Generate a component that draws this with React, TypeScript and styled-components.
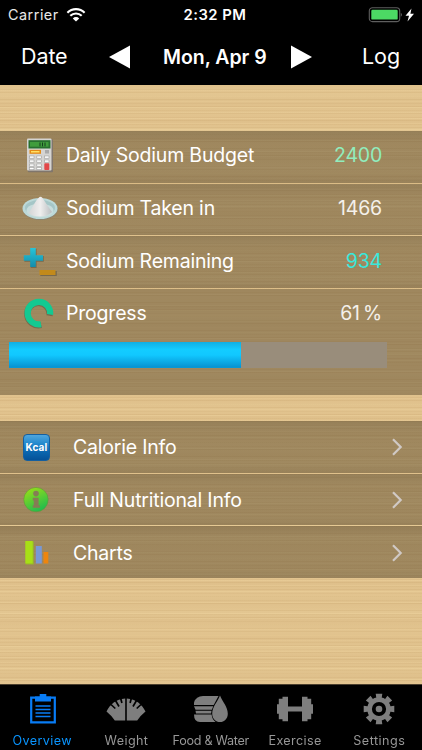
import React, { ReactNode } from 'react';
import styled, { createGlobalStyle } from 'styled-components';

const GlobalStyle = createGlobalStyle`
  * {
    box-sizing: border-box;
  }

  body {
    margin: 0;
    background: #000;
    font-family: Inter, 'Liberation Sans', sans-serif;
    -webkit-font-smoothing: antialiased;
  }
`;

const Screen = styled.div`
  width: 422px;
  height: 750px;
  display: flex;
  flex-direction: column;
  overflow: hidden;
  color: #fff;
  white-space: nowrap;
`;

const StatusBar = styled.div`
  height: 28px;
  flex: none;
  display: grid;
  grid-template-columns: 1fr auto 1fr;
  align-items: center;
  padding: 1px 6px 0 8px;
  background: #000;
  font-size: 14.4px;
`;

const Carrier = styled.div`
  display: flex;
  align-items: center;
  gap: 7px;
  color: #e8e8e8;
  letter-spacing: 0.5px;
`;

const Clock = styled.div`
  font-weight: 600;
  font-size: 14.8px;
  letter-spacing: 0.5px;
  padding-left: 6px;
`;

const Battery = styled.div`
  display: flex;
  justify-content: flex-end;
`;

const NavBar = styled.div`
  height: 57px;
  flex: none;
  display: flex;
  justify-content: space-between;
  align-items: center;
  padding: 0 22px 0 21px;
  background: #000;
`;

const NavButton = styled.button`
  padding: 0 0 2px;
  border: 0;
  background: none;
  color: #fff;
  font: 400 21.5px Inter, sans-serif;
  letter-spacing: -0.1px;
`;

const DayPicker = styled.div`
  display: flex;
  align-items: center;
  gap: 23px;
  margin-right: 9px;
`;

const Day = styled.div`
  width: 115px;
  padding-left: 9px;
  text-align: center;
  font-size: 19.5px;
  font-weight: 600;
  letter-spacing: -0.05px;
`;

const Content = styled.div`
  flex: 1;
  display: flex;
  flex-direction: column;
  gap: 26px;
  padding-top: 46px;
  background:
    repeating-linear-gradient(
      180deg,
      rgba(148, 101, 38, 0.08) 0 1px,
      transparent 1px 4px,
      rgba(148, 101, 38, 0.05) 4px 5px,
      transparent 5px 7px
    ),
    repeating-linear-gradient(
      180deg,
      rgba(255, 232, 178, 0.2) 0 1px,
      transparent 1px 5px,
      rgba(255, 232, 178, 0.12) 5px 6px,
      transparent 6px 11px
    ),
    repeating-linear-gradient(
      180deg,
      #dfc08b 0,
      #e3c691 9px,
      #dfc08b 17px,
      #e2c48f 29px,
      #dfc08b 37px
    );
`;

const Section = styled.div`
  display: flex;
  flex-direction: column;
  gap: 1px;
`;

const Row = styled.div`
  height: 51.67px;
  display: flex;
  align-items: center;
  padding: 0 40px 3px 22px;
  background: linear-gradient(
    180deg,
    rgba(75, 60, 35, 0.5) 0,
    rgba(80, 65, 38, 0.45) 12px,
    rgba(80, 65, 38, 0.45) calc(100% - 8px),
    rgba(75, 60, 35, 0.48) 100%
  );
`;

const LinkRow = styled(Row)`
  padding: 1px 18px 0 22px;
`;

const ProgressPanel = styled.div`
  height: 106px;
  display: flex;
  flex-direction: column;
  background: rgba(80, 65, 38, 0.45);
`;

const ProgressRow = styled(Row)`
  background: none;
`;

const IconBox = styled.div<{ $width: number }>`
  width: ${({ $width }) => $width}px;
  flex: none;
  display: flex;
`;

const Label = styled.div`
  flex: 1;
  font-size: 19.5px;
  letter-spacing: -0.2px;
`;

const Value = styled.div<{ $color?: string }>`
  font-size: 19.5px;
  letter-spacing: -0.2px;
  word-spacing: -2px;
  color: ${({ $color }) => $color || '#f4f0ea'};
`;

const Track = styled.div`
  width: 378px;
  height: 26px;
  margin: 1px 0 0 9px;
  background: #998d7b;
`;

const Fill = styled.div`
  height: 100%;
  background: linear-gradient(
    180deg,
    #10afe2 0,
    #13ccff 30%,
    #11c8ff 50%,
    #0795d3 95%,
    #0799d5 100%
  );
`;

const TabBar = styled.div`
  height: 66px;
  flex: none;
  display: grid;
  grid-template-columns: repeat(5, 84.3px);
  border-top: 1px solid #4b3f2d;
  background: #000;
`;

const Tab = styled.div<{ $active?: boolean }>`
  display: flex;
  flex-direction: column;
  align-items: center;
  color: ${({ $active }) => ($active ? '#087cf5' : '#7e7e7e')};
`;

const TabIcon = styled.div`
  height: 48px;
  display: flex;
  align-items: center;
`;

const TabLabel = styled.div<{ $spacing: number }>`
  font-size: 12.6px;
  line-height: 15px;
  letter-spacing: ${({ $spacing }) => $spacing}px;
  filter: brightness(1.2);
`;

const WifiIcon = () => (
  <svg width="20" height="14" viewBox="0 0 20 14" fill="none" stroke="#fff">
    <path d="M1.4 4.7a12.3 12.3 0 0 1 17.2 0" strokeWidth="2.2" />
    <path d="M4.3 7.8a8.1 8.1 0 0 1 11.4 0" strokeWidth="2.1" />
    <path d="M10 13.6 6.8 10.4a4.5 4.5 0 0 1 6.4 0Z" fill="#fff" stroke="none" />
  </svg>
);

const BatteryIcon = () => (
  <svg width="48" height="16" viewBox="0 0 48 16">
    <rect x="1.3" y="0.8" width="30.4" height="13.8" rx="3.2" fill="none" stroke="#5e5e5e" strokeWidth="1.1" />
    <rect x="3.3" y="2.8" width="26.4" height="9.8" rx="1.2" fill="#4cd964" />
    <path d="M32.8 5.7q2.2 2 0 4Z" fill="#6b6b6b" />
    <path d="m43.5 1.5-6 7.3h3.5L39.5 14.5l6.5-7.7h-3.6Z" fill="#fff" />
  </svg>
);

const Arrow = ({ points }: { points: string }) => (
  <svg width="21" height="24" viewBox="0 0 21 24" fill="#fff">
    <polygon points={points} />
  </svg>
);

const CalculatorIcon = () => (
  <svg width="36" height="36" viewBox="0 0 36 36">
    <rect x="5.8" y="2.3" width="25.2" height="33" rx="1" fill="#80766c" />
    <rect x="5" y="1.5" width="24.5" height="32" rx="1" fill="#d5d4d2" />
    <rect x="6.5" y="3.2" width="22" height="8.3" fill="#28702f" />
    <rect x="8" y="5" width="18.5" height="4.7" fill="#3f9c3b" />
    <path d="M18 5.5v3.8M20.5 5.5v3.8M23 5.5v3.8" stroke="#163f20" />
    <rect x="7.5" y="12.8" width="11.5" height="4" fill="#e48b16" />
    <rect x="9" y="14" width="8.5" height="1.5" fill="#ffe064" />
    <rect x="23" y="13" width="4" height="3.5" fill="#aaa" />
    <g fill="#fff" stroke="#9d9d9d" strokeWidth="0.6">
      {[19, 23, 27, 30.5].map((y) => (
        <g key={y}>
          <rect x="7.5" y={y} width="4.5" height="2.2" />
          <rect x="14.8" y={y} width="4.5" height="2.2" />
        </g>
      ))}
      <rect x="22.5" y="19" width="4.5" height="2.2" />
      <rect x="22.5" y="23" width="4.5" height="2.2" />
    </g>
    <rect x="22.3" y="26.2" width="5" height="6.8" rx="0.8" fill="#e24749" />
  </svg>
);

const SaltIcon = () => (
  <svg width="36" height="26" viewBox="0 0 36 26">
    <defs>
      <linearGradient id="salt" x1="0" x2="1">
        <stop offset="0" stopColor="#d4d4d5" />
        <stop offset="0.5" stopColor="#efeeee" />
        <stop offset="1" stopColor="#b9bec1" />
      </linearGradient>
    </defs>
    <ellipse cx="18.3" cy="14.6" rx="17.5" ry="10.5" fill="#8d836f" />
    <ellipse cx="18" cy="13.5" rx="17.5" ry="10.5" fill="#bcd9d8" />
    <ellipse cx="18" cy="13" rx="15" ry="8" fill="#a5c6c7" />
    <ellipse cx="18" cy="15.5" rx="13.5" ry="7" fill="#c8dddd" />
    <path d="M6.5 18C10 14 12 7.5 16.5 3Q18.5 0.5 20.5 3C24 8 27 13 30 17Q25 21.5 18 21.5T6.5 18Z" fill="url(#salt)" />
  </svg>
);

const PlusMinusIcon = () => (
  <svg width="36" height="32" viewBox="0 0 36 32">
    <defs>
      <linearGradient id="plus" x2="0" y2="1">
        <stop stopColor="#27c5d9" />
        <stop offset="1" stopColor="#148caa" />
      </linearGradient>
    </defs>
    <path d="M8.8 3.8h5.8v7.3h7.2v5.6h-7.2v6.2H8.8v-6.2H2.4v-5.6h6.4Z" fill="#77694d" />
    <path d="M8.2 3h5.6v7.3h7.2v5.4h-7.2v6.3H8.2v-6.3H1.8v-5.4h6.4Z" fill="url(#plus)" />
    <path d="M18.3 26h16.5v5H18.3Z" fill="#77694d" />
    <path d="M17.5 25h16v5h-16Z" fill="#c28a1b" />
  </svg>
);

const RingIcon = () => (
  <svg width="36" height="32" viewBox="0 0 36 32" fill="none" strokeWidth="6.2">
    <path d="M27.5 18.8A11.2 11.2 0 1 0 19.2 28" stroke="#776b4c" />
    <path d="M28.1 17.5A11.3 11.3 0 1 0 19 27.2" stroke="#13c991" />
  </svg>
);

const KcalBadge = styled.div`
  width: 27px;
  height: 27px;
  display: flex;
  justify-content: center;
  padding-top: 7px;
  margin-left: 1px;
  border: 1px solid #155f9f;
  border-radius: 4px;
  background: linear-gradient(180deg, #4fa6de 0, #2389cd 35%, #0b68b1 65%, #055298);
  font: 700 10px/11px Inter, sans-serif;
  letter-spacing: 0.2px;
`;

const InfoIcon = () => (
  <svg width="28" height="28" viewBox="0 0 28 28">
    <defs>
      <linearGradient id="info" x2="0.5" y2="1">
        <stop stopColor="#a4e213" />
        <stop offset="1" stopColor="#26bd4b" />
      </linearGradient>
    </defs>
    <circle cx="14" cy="13.6" r="12.2" fill="url(#info)" stroke="#64953a" strokeWidth="0.6" />
    <circle cx="14" cy="7.6" r="2.8" fill="#857c55" />
    <path d="M10.8 11.8h5.8v7.4h1.3v2.6h-7.1v-2.6h1v-4.8h-1Z" fill="#857c55" />
  </svg>
);

const ChartIcon = () => (
  <svg width="28" height="28" viewBox="0 0 28 28">
    <path d="M3.8 2.5h8v23h-8Z" fill="#96b52b" />
    <path d="M3.3 2h7.4v22.5H3.3Z" fill="#a8df16" />
    <path d="M13.8 7h6v17.5h-6Z" fill="#7898d6" />
    <path d="M21.5 13h4.8v11.5h-4.8Z" fill="#ee850d" />
  </svg>
);

const Chevron = () => (
  <svg width="12" height="18" viewBox="0 0 12 18" fill="none" stroke="#d0c9c5" strokeWidth="2.2">
    <path d="m1 1.3 7.7 7.7L1 16.7" />
  </svg>
);

const ClipboardIcon = () => (
  <svg width="27" height="32" viewBox="0 0 27 32" fill="none" stroke="currentColor">
    <path d="M2.2 4.7h23.6v24.6H2.2Z" strokeWidth="2.2" />
    <path d="M6 3.5h4.7V1h6.6v2.5H22V8.5H6Z" fill="currentColor" stroke="none" />
    <path d="M6.5 13h15M6.5 16.5h15M6.5 20h15M6.5 23.5h15" strokeWidth="1.6" />
  </svg>
);

const ScaleIcon = () => (
  <svg width="40" height="26" viewBox="0 0 40 26">
    <path
      d="M0.5 15.5C4 8.5 10 3 19.2 2.5V24.5H8.8Q5.5 19.5 0.5 15.5ZM39.5 15.5C36 8.5 30 3 20.8 2.5v22h10.4q3.3-5 8.3-9Z"
      fill="currentColor"
    />
    <path
      d="m5 8.5 4.3 4M9.5 4.5l3.5 6M14.6 2l1.3 5M35 8.5l-4.3 4M30.5 4.5l-3.5 6M25.4 2l-1.3 5"
      stroke="#000"
      strokeWidth="1.7"
    />
  </svg>
);

const FoodIcon = () => (
  <svg width="36" height="28" viewBox="0 0 36 28" fill="currentColor">
    <path d="M1 10V7.5Q3 1 10 1h15.5l-4.8 9Z" />
    <path d="M1 11.2h19.3l-1.5 3.6H2.5ZM2.5 15.8h16l-.4 2.6H3ZM1 19.5h17.6q.5 5 4 7.5H7q-6 0-6-7.5Z" />
    <path d="M27 0.5c2.8 6.5 7.8 11.7 7.8 18.2 0 5-3.5 8.3-7.8 8.3s-7.8-3.3-7.8-8.3C19.2 12.2 24.2 7 27 0.5Z" />
  </svg>
);

const DumbbellIcon = () => (
  <svg width="38" height="28" viewBox="0 0 38 28" fill="currentColor">
    <path d="M12 11.5h14v5H12v9.8H6.5v-2H2.8v-5.5H1v-9.6h1.8V3.7h3.7v-2H12ZM26 1.7h5.5v2h3.7v5.5H37v9.6h-1.8v5.5h-3.7v2H26Z" />
  </svg>
);

const GearIcon = () => (
  <svg width="32" height="32" viewBox="0 0 32 32" fill="currentColor">
    {[0, 45, 90, 135].map((angle) => (
      <path key={angle} d="M12.7.7h6.6l-1 7h-4.6ZM12.7 31.3h6.6l-1-7h-4.6Z" transform={`rotate(${angle} 16 16)`} />
    ))}
    <circle cx="16" cy="16" r="11.8" />
    <circle cx="16" cy="16" r="5.2" fill="none" stroke="#000" strokeWidth="3.8" />
  </svg>
);

interface SodiumRow {
  label: string;
  value: string;
  icon: ReactNode;
  color?: string;
}

const sodiumRows: SodiumRow[] = [
  { label: 'Daily Sodium Budget', value: '2400', icon: <CalculatorIcon />, color: '#91edbd' },
  { label: 'Sodium Taken in', value: '1466', icon: <SaltIcon /> },
  { label: 'Sodium Remaining', value: '934', icon: <PlusMinusIcon />, color: '#38e8dc' },
];

const links = [
  { label: 'Calorie Info', icon: <KcalBadge>Kcal</KcalBadge> },
  { label: 'Full Nutritional Info', icon: <InfoIcon /> },
  { label: 'Charts', icon: <ChartIcon /> },
];

const tabs = [
  { label: 'Overview', icon: <ClipboardIcon />, spacing: 0.4 },
  { label: 'Weight', icon: <ScaleIcon />, spacing: 0.4 },
  { label: 'Food & Water', icon: <FoodIcon />, spacing: -0.3 },
  { label: 'Exercise', icon: <DumbbellIcon />, spacing: 0.35 },
  { label: 'Settings', icon: <GearIcon />, spacing: 0.5 },
];

const App: React.FC = () => {
  const progress = 61.4;

  return (
    <Screen>
      <GlobalStyle />
      <StatusBar>
        <Carrier>
          Carrier <WifiIcon />
        </Carrier>
        <Clock>2:32 PM</Clock>
        <Battery>
          <BatteryIcon />
        </Battery>
      </StatusBar>
      <NavBar>
        <NavButton>Date</NavButton>
        <DayPicker>
          <Arrow points="0,12 21,0.5 21,23.5" />
          <Day>Mon, Apr 9</Day>
          <Arrow points="21,12 0,0.5 0,23.5" />
        </DayPicker>
        <NavButton>Log</NavButton>
      </NavBar>
      <Content>
        <Section>
          {sodiumRows.map(({ label, value, icon, color }) => (
            <Row key={label}>
              <IconBox $width={44}>{icon}</IconBox>
              <Label>{label}</Label>
              <Value $color={color}>{value}</Value>
            </Row>
          ))}
          <ProgressPanel>
            <ProgressRow>
              <IconBox $width={44}>
                <RingIcon />
              </IconBox>
              <Label>Progress</Label>
              <Value>{Math.floor(progress)} %</Value>
            </ProgressRow>
            <Track>
              <Fill style={{ width: `${progress}%` }} />
            </Track>
          </ProgressPanel>
        </Section>
        <Section>
          {links.map(({ label, icon }) => (
            <LinkRow key={label}>
              <IconBox $width={51}>{icon}</IconBox>
              <Label>{label}</Label>
              <Chevron />
            </LinkRow>
          ))}
        </Section>
      </Content>
      <TabBar>
        {tabs.map(({ label, icon, spacing }, index) => (
          <Tab key={label} $active={index === 0}>
            <TabIcon>{icon}</TabIcon>
            <TabLabel $spacing={spacing}>{label}</TabLabel>
          </Tab>
        ))}
      </TabBar>
    </Screen>
  );
};

export default App;
